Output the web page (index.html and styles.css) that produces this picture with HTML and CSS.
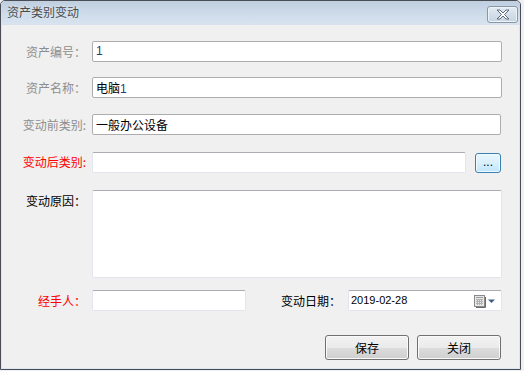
FILE: index.html
```html
<!DOCTYPE html>
<html lang="zh-CN">
<head>
<meta charset="utf-8">
<title>资产类别变动</title>
<link rel="stylesheet" href="styles.css">
</head>
<body>
<div class="window">
  <div class="titlebar">
    <span class="title">资产类别变动</span>
    <div class="close-btn">
      <svg width="16" height="11" viewBox="0 0 16 11">
        <path d="M2 1 L5 1 L8 4 L11 1 L14 1 L9.5 5.5 L14 10 L11 10 L8 7 L5 10 L2 10 L6.5 5.5 Z" fill="#fff" stroke="#5a6878" stroke-width="1" stroke-linejoin="round"/>
      </svg>
    </div>
  </div>
  <div class="body">
    <div class="row r1">
      <label class="lbl gray">资产编号：</label>
      <div class="field box-gray num">1</div>
    </div>
    <div class="row r2">
      <label class="lbl gray">资产名称：</label>
      <div class="field box-gray">电脑<span class="num">1</span></div>
    </div>
    <div class="row r3">
      <label class="lbl gray">变动前类别:</label>
      <div class="field box-gray">一般办公设备</div>
    </div>
    <div class="row r4">
      <label class="lbl red">变动后类别:</label>
      <div class="field box-light short"></div>
      <div class="dots-btn">...</div>
    </div>
    <div class="row r5">
      <label class="lbl black top">变动原因：</label>
      <div class="field box-light area"></div>
    </div>
    <div class="row r6">
      <label class="lbl red">经手人：</label>
      <div class="field box-light person"></div>
      <label class="lbl2">变动日期：</label>
      <div class="field box-light date">
        <span class="date-text">2019-02-28</span>
        <svg class="cal" width="24" height="14" viewBox="0 0 24 14">
          <rect x="1.5" y="1.5" width="10" height="11" fill="#e8e8e8" stroke="#8a8a8a"/>
          <rect x="3" y="3" width="7" height="1" fill="#9a9a9a"/>
          <path d="M3 5.5h7M3 7.5h7M3 9.5h7M4.5 5v6M6.5 5v6M8.5 5v6" stroke="#b0b0b0" stroke-width="1"/>
          <path d="M12.5 3v10.5H3" stroke="#6a6a6a" fill="none"/>
          <path d="M15 5.5h7l-3.5 3.5z" fill="#3f5f86"/>
        </svg>
      </div>
    </div>
    <div class="row buttons">
      <div class="btn">保存</div>
      <div class="btn">关闭</div>
    </div>
  </div>
</div>
</body>
</html>
```
FILE: styles.css
```css
html, body {
  margin: 0;
  padding: 0;
  background: #eef0f3;
}
body {
  width: 524px;
  height: 371px;
  overflow: hidden;
  font-family: "Noto Sans CJK SC", "Liberation Sans", sans-serif;
  font-size: 12px;
}
.window {
  box-sizing: border-box;
  width: 521px;
  height: 370px;
  border: 1px solid #4a4e54;
  border-radius: 5px 5px 0 0;
  background: #f0f0f0;
  box-shadow: inset 0 0 0 1px #dce6f2;
  overflow: hidden;
  display: flex;
  flex-direction: column;
}
.titlebar {
  height: 23px;
  flex: none;
  background: linear-gradient(#bfcfe0, #cfdcea 60%, #d8e3ef);
  display: flex;
  align-items: center;
  justify-content: space-between;
  padding: 0 2px 0 6px;
  border-bottom: 1px solid #d6e1ec;
}
.title {
  color: #4a4a4a;
  font-size: 12px;
  line-height: 14px;
  text-shadow: 0 0 3px #eaf1f8;
  margin-top: -2px;
}
.close-btn {
  box-sizing: border-box;
  width: 31px;
  height: 17px;
  margin-top: 4px;
  border: 1px solid #8896a6;
  border-radius: 3px;
  background: linear-gradient(#e5ecf4, #d3deea 50%, #c6d4e3);
  box-shadow: inset 0 0 0 1px #eef3f8;
  display: flex;
  align-items: center;
  justify-content: center;
}
.body {
  flex: 1;
  padding: 16px 0 0 0;
  display: flex;
  flex-direction: column;
}
.row {
  display: flex;
  align-items: center;
}
.r2 { margin-top: 15px; }
.r3 { margin-top: 16px; }
.r4 { margin-top: 16px; }
.r5 { margin-top: 17px; align-items: flex-start; }
.r6 { margin-top: 12px; }
.buttons { margin-top: 24px; justify-content: flex-end; gap: 8px; padding-right: 19px; }
.lbl {
  width: 85px;
  text-align: right;
  margin-right: 6px;
  white-space: nowrap;
  line-height: 16px;
}
.lbl.top { margin-top: 3px; }
.gray { color: #8e8e8e; }
.red { color: #ff0000; }
.black { color: #000; }
.field {
  box-sizing: border-box;
  height: 21px;
  width: 410px;
  background: #fff;
  padding: 0 3px;
  line-height: 19px;
  color: #000;
  white-space: nowrap;
}
.num {
  font-family: "Liberation Sans", sans-serif;
  color: #2a3a7a;
}
.box-gray {
  border: 1px solid #adadad;
  border-radius: 2px;
}
.box-light {
  border: 1px solid #e2e6ec;
  border-top-color: #abadb3;
  border-radius: 2px;
}
.r3 .field { width: 409px; }
.field.short {
  width: 374px;
}
.dots-btn {
  box-sizing: border-box;
  width: 26px;
  height: 20px;
  margin-left: 9px;
  margin-top: 2px;
  border: 1px solid #3c7fb1;
  border-radius: 3px;
  background: linear-gradient(#eaf6fd, #d9f0fc 50%, #bee6fd);
  box-shadow: inset 0 0 0 1px #f2faff;
  font-family: "Liberation Sans", sans-serif;
  font-size: 12px;
  line-height: 17px;
  text-align: center;
  color: #000;
  letter-spacing: 0;
}
.field.area {
  height: 88px;
  width: 410px;
}
.field.person {
  width: 154px;
}
.lbl2 {
  margin-left: 35px;
  width: 67px;
  color: #000;
  line-height: 16px;
  white-space: nowrap;
}
.field.date {
  width: 154px;
  display: flex;
  align-items: center;
  justify-content: space-between;
  padding: 0 4px 0 2px;
}
.date-text {
  font-family: "Liberation Sans", sans-serif;
  font-size: 11px;
  color: #000;
}
.cal { display: block; margin-top: 1px; }
.btn {
  box-sizing: border-box;
  width: 84px;
  height: 25px;
  border: 1px solid #707070;
  border-radius: 3px;
  background: linear-gradient(#f2f2f2, #ebebeb 50%, #dddddd 51%, #cfcfcf);
  box-shadow: inset 0 0 0 1px #fafafa;
  text-align: center;
  line-height: 23px;
  color: #000;
}
```
